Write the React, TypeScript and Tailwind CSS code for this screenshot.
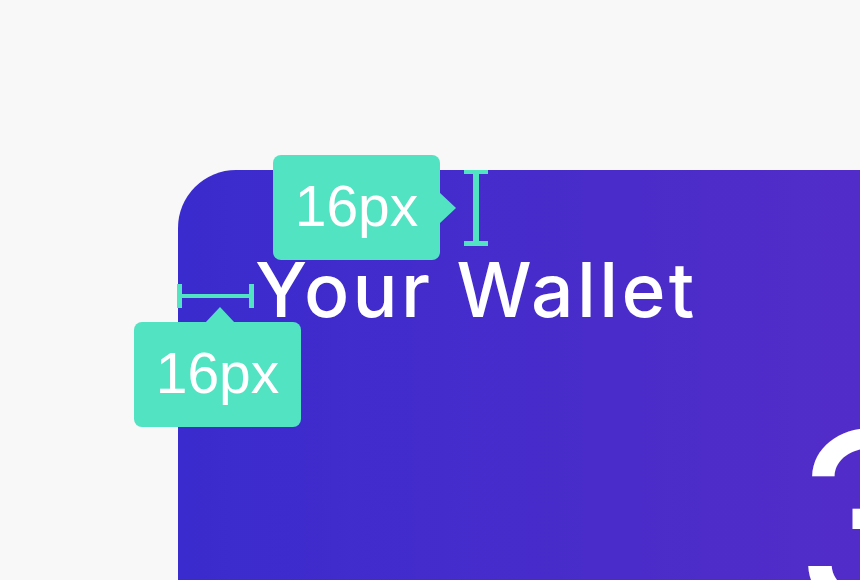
import React from 'react';

const Label: React.FC<{ className?: string }> = ({ className }) => (
  <div
    className={`absolute w-[167px] h-[105px] rounded-[8px] bg-[#52e3c2] flex items-center justify-center text-white text-[57px] leading-none ${className ?? ''}`}
    style={{ fontFamily: '"Liberation Sans", Arial, sans-serif' }}
  >
    <span className="-mt-[2px]">16px</span>
  </div>
);

export default function App() {
  return (
    <div className="relative w-[860px] h-[580px] overflow-hidden bg-[#f8f8f8]">
      {/* wallet card */}
      <div className="ml-[178px] mt-[170px] w-[800px] h-[520px] rounded-tl-[58px] bg-linear-to-r from-[#3a2bce] to-[#562cc7] relative flex flex-col">
        <h1
          className="pt-[82px] pl-[77px] text-white text-[75px] font-medium leading-none tracking-[3.3px]"
          style={{ fontFamily: 'Inter, "Noto Sans", sans-serif' }}
        >
          Your Wallet
        </h1>
        <span
          className="absolute left-[615px] top-[226px] text-white text-[250px] font-normal leading-none"
          style={{ fontFamily: 'Inter, "Noto Sans", sans-serif' }}
        >
          3
        </span>
      </div>

      {/* spacing annotations */}
      <Label className="left-[273px] top-[155px]" />
      <div className="absolute left-[439px] top-[192px] w-0 h-0 border-y-[16px] border-y-transparent border-l-[17px] border-l-[#52e3c2]" />
      <div className="absolute left-[464px] top-[170px] w-[24px] h-[76px] flex flex-col items-center justify-between">
        <div className="w-[24px] h-[4px] bg-[#52e3c2]" />
        <div className="flex-1 w-[6px] bg-[#52e3c2]" />
        <div className="w-[24px] h-[5px] bg-[#52e3c2]" />
      </div>

      <Label className="left-[134px] top-[322px]" />
      <div className="absolute left-[205px] top-[307px] w-0 h-0 border-x-[15px] border-x-transparent border-b-[16px] border-b-[#52e3c2]" />
      <div className="absolute left-[177px] top-[284px] w-[77px] h-[24px] flex items-center justify-between">
        <div className="w-[5px] h-[24px] bg-[#52e3c2]" />
        <div className="flex-1 h-[4px] bg-[#52e3c2]" />
        <div className="w-[5px] h-[24px] bg-[#52e3c2]" />
      </div>
    </div>
  );
}
